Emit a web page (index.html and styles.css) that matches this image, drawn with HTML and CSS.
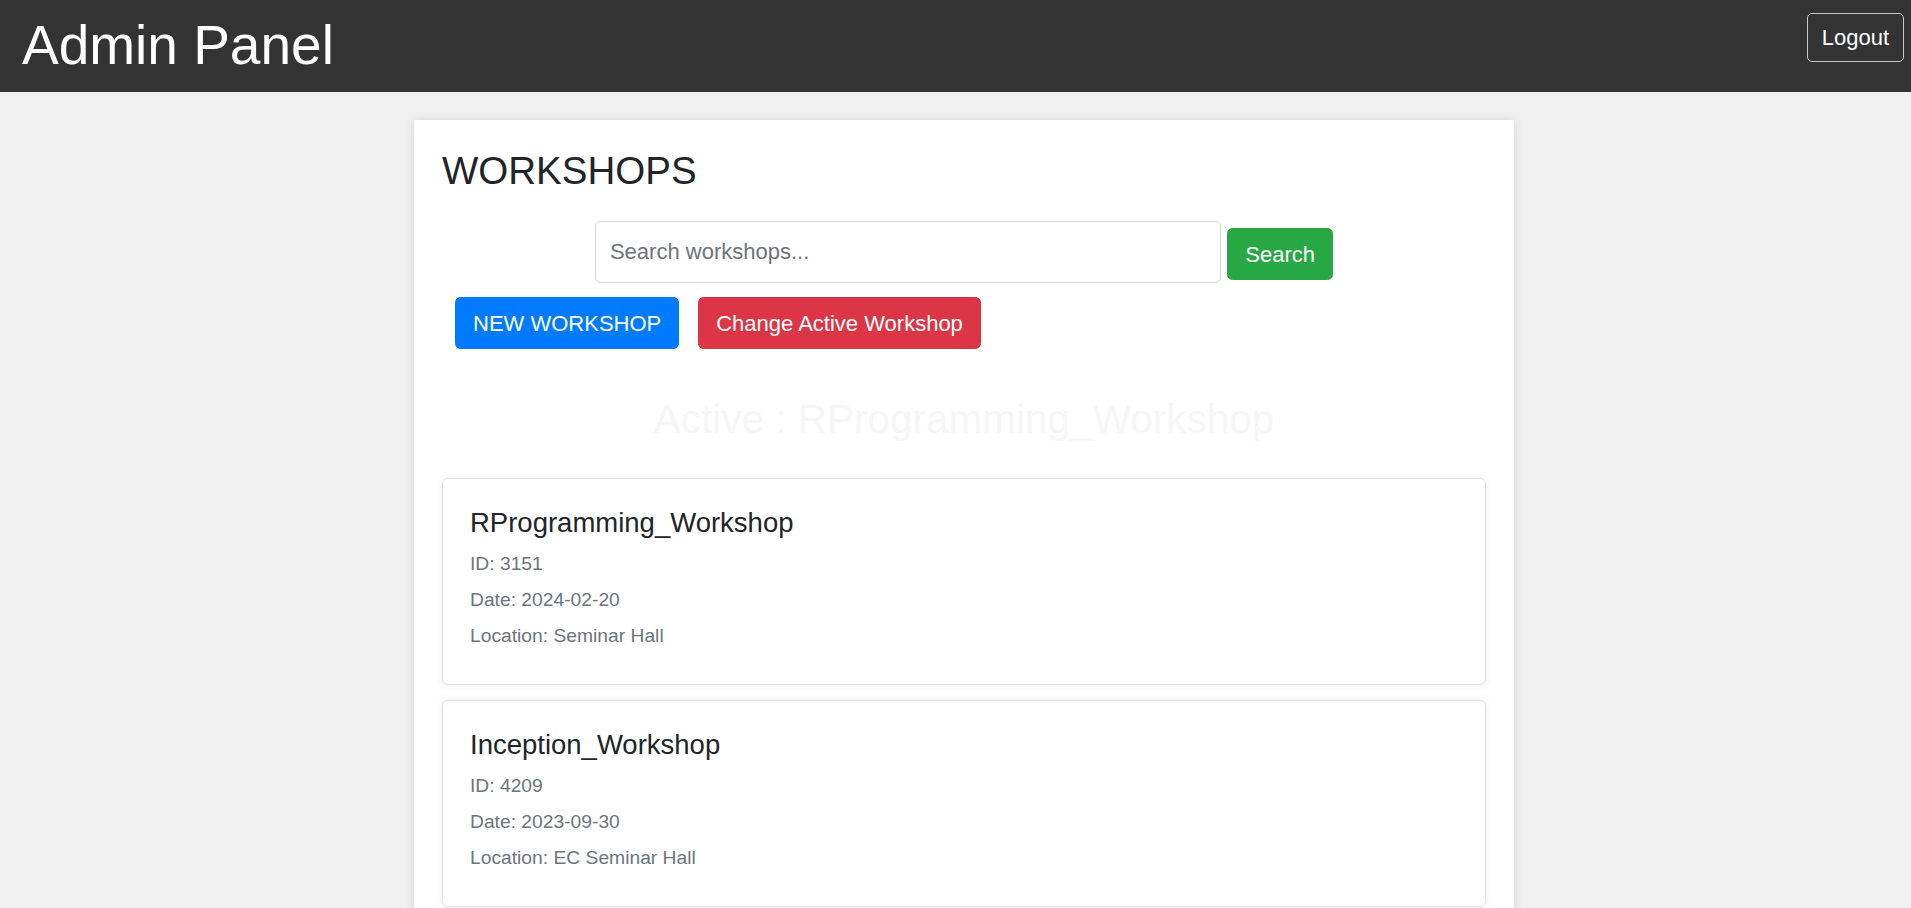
FILE: index.html
```html
<!DOCTYPE html>
<html lang="en">
<head>
<meta charset="utf-8">
<title>Admin Panel</title>
<link rel="stylesheet" href="styles.css">
</head>
<body>
<header class="topbar">
  <h1 class="brand">Admin Panel</h1>
  <button class="logout">Logout</button>
</header>
<div class="page">
  <main class="panel">
    <h3 class="panel-title">WORKSHOPS</h3>
    <form class="search">
      <input class="search-input" type="text" placeholder="Search workshops...">
      <button type="button" class="btn btn-green search-btn">Search</button>
    </form>
    <div class="actions">
      <button class="btn btn-blue">NEW WORKSHOP</button>
      <button class="btn btn-red">Change Active Workshop</button>
    </div>
    <h3 class="active">Active : RProgramming_Workshop</h3>
    <div class="card">
      <h5 class="card-title">RProgramming_Workshop</h5>
      <p class="card-text">ID: 3151</p>
      <p class="card-text">Date: 2024-02-20</p>
      <p class="card-text">Location: Seminar Hall</p>
    </div>
    <div class="card">
      <h5 class="card-title">Inception_Workshop</h5>
      <p class="card-text">ID: 4209</p>
      <p class="card-text">Date: 2023-09-30</p>
      <p class="card-text">Location: EC Seminar Hall</p>
    </div>
  </main>
</div>
</body>
</html>
```

FILE: styles.css
```css
* { box-sizing: border-box; }

body {
  margin: 0;
  background: #f0f0f0;
  font-family: "Liberation Sans", Arial, sans-serif;
  color: #212529;
}

.topbar {
  height: 92px;
  background: #333333;
  display: flex;
  justify-content: space-between;
  align-items: flex-start;
  padding: 0 7px 0 22px;
}

.brand {
  margin: 12px 0 0 0;
  font-size: 55px;
  line-height: 66px;
  font-weight: normal;
  color: #ffffff;
}

.logout {
  margin-top: 13px;
  font-family: inherit;
  font-size: 22px;
  line-height: 33px;
  color: #ffffff;
  background: transparent;
  border: 1px solid #c8c8c8;
  border-radius: 5px;
  padding: 7px 14px;
}

.page {
  padding-left: 17px;
}

.panel {
  width: 1100px;
  margin: 28px auto 0 auto;
  background: #ffffff;
  padding: 28px 28px 20px 28px;
  box-shadow: 0 0 10px rgba(0, 0, 0, 0.1);
}

.panel-title {
  margin: 0;
  font-size: 38.5px;
  line-height: 46px;
  font-weight: normal;
  color: #212529;
}

.search {
  display: flex;
  justify-content: center;
  align-items: flex-start;
  gap: 6px;
  margin: 27px 0 0 0;
}

.search-input {
  width: 60%;
  height: 62px;
  font-family: inherit;
  font-size: 22px;
  line-height: 33px;
  padding: 13px 14px;
  border: 1px solid #d4d4d4;
  border-radius: 5px;
  color: #495057;
}

.search-input::placeholder {
  color: #6c757d;
}

.search-btn {
  margin-top: 7px;
}

.btn {
  font-family: inherit;
  font-size: 22px;
  line-height: 33px;
  padding: 8.5px 17px;
  border: 1px solid transparent;
  border-radius: 5.5px;
  color: #ffffff;
  font-weight: normal;
}

.btn-green { background: #28a745; border-color: #28a745; }
.btn-blue { background: #007bff; border-color: #007bff; }
.btn-red { background: #dc3545; border-color: #dc3545; }

.actions {
  display: flex;
  gap: 19px;
  padding-left: 13px;
  margin-top: 14px;
}

.active {
  margin: 47px 0 36px 0;
  text-align: center;
  font-size: 40.5px;
  line-height: 46px;
  font-weight: normal;
  color: #f7f7f7;
}

.card {
  border: 1px solid #e2e2e2;
  border-radius: 6px;
  padding: 27px;
  margin-bottom: 15px;
  box-shadow: 0 0 8px rgba(0, 0, 0, 0.07);
  background: #ffffff;
}

.card-title {
  margin: 0 0 10px 0;
  font-size: 27.5px;
  line-height: 33px;
  font-weight: normal;
  color: #212529;
}

.card-text {
  margin: 0 0 7px 0;
  font-size: 19.25px;
  line-height: 29px;
  color: #6c757d;
}
```
